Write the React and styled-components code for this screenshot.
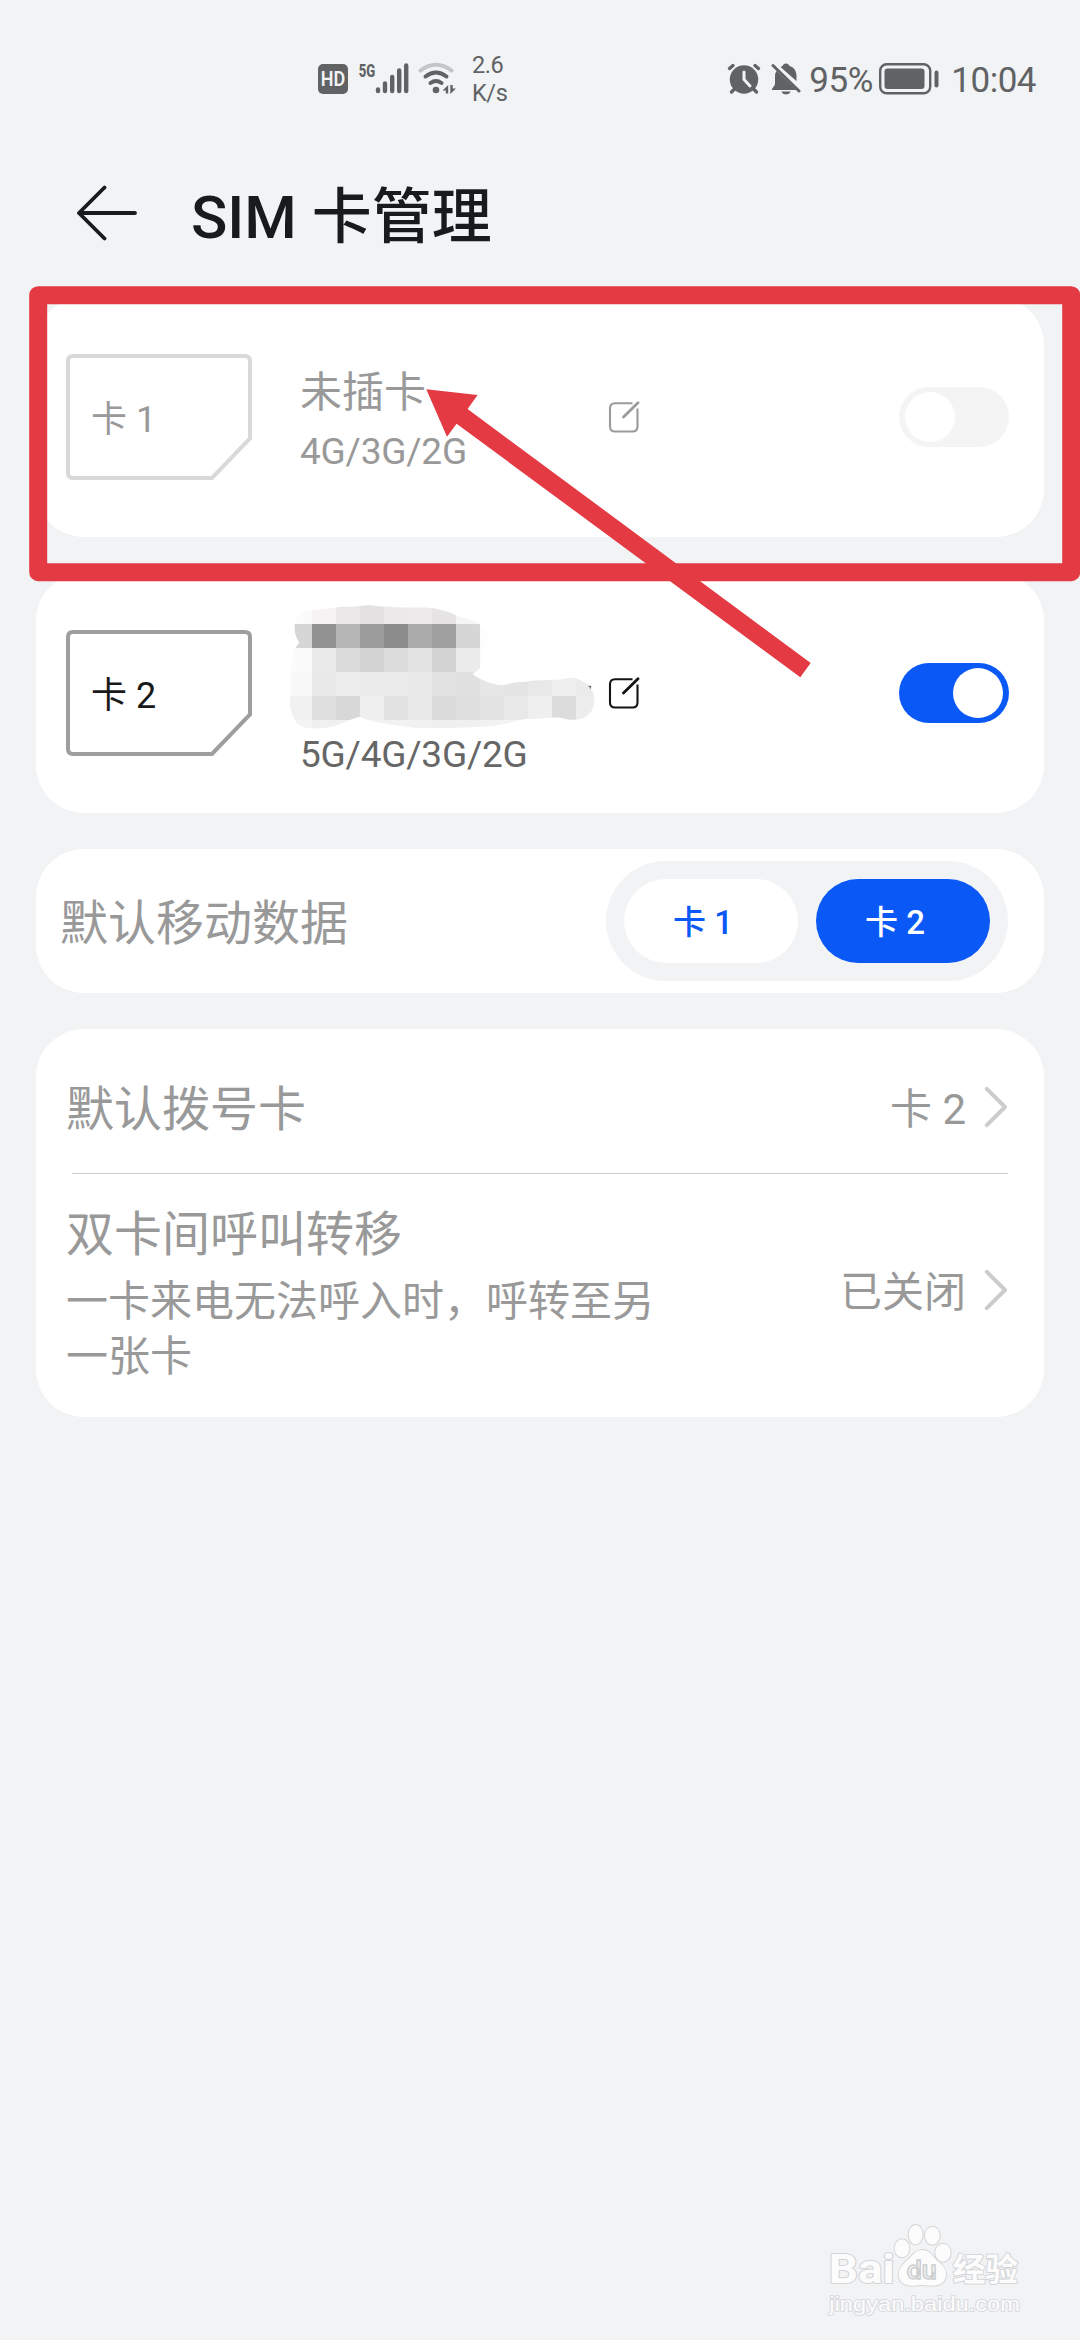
import React from 'react';
import styled, { createGlobalStyle } from 'styled-components';

const GlobalStyle = createGlobalStyle`
	* {
		box-sizing: border-box;
	}
	body {
		margin: 0;
		background: #f1f3f5;
		font-family: Roboto, "Noto Sans CJK SC", sans-serif;
	}
`;

const ink = '#606264';

const mosaic = [
	['#fbfbfb', '#f5f3f4', '#eae7e8', '#e4e1e2', '#ebe9ea', '#eeebec', '#e6e4e5', '#f6f5f5', '#fdfdfd'],
	['#d6d6d6', '#929292', '#b6b6b6', '#9c9c9c', '#8c8c8c', '#ababab', '#a0a0a0', '#d6d6d6', '#fdfdfd'],
	['#fbfbfb', '#eaeaea', '#dbdbdb', '#d3d3d3', '#dcdcdc', '#e3e3e3', '#d3d3d3', '#ececec', '#fdfdfd'],
	['#f8f8f8', '#e8e8e8', '#ededed', '#ebebeb', '#ebebeb', '#e8e8e8', '#e2e2e2', '#e0e0e0', '#e6e6e6', '#e4e4e4', '#e8e8e8', '#efefef', '#ebebeb'],
	['#f1f1f1', '#dfdfdf', '#d8d8d8', '#efefef', '#e2e2e2', '#e9e9e9', '#dbdbdb', '#dfdfdf', '#e3e3e3', '#e8e8e8', '#efefef', '#dcdcdc', '#ededed'],
	['#f3f3f3', '#f0f0f0', '#f0f0f0', '#f3f3f3', '#f2f2f2', '#f1f1f1', '#f0f0f0', '#f0f0f0', '#f2f2f2', '#f3f3f3', '#f3f3f3', '#f0f0f0', '#f0f0f0'],
];

function SignalIcons() {
	return (
		<svg width="140" height="40" viewBox="316 59 140 40">
			<rect x="318" y="64" width="30" height="30" rx="5" fill={ink} />
			<text x="320.8" y="86" fontSize="19.5" fontWeight="600" textLength="24.5" lengthAdjust="spacingAndGlyphs" fill="#f1f3f5">
				HD
			</text>
			<text x="358.8" y="76.5" fontSize="19" fontWeight="800" textLength="16.5" lengthAdjust="spacingAndGlyphs" fill={ink}>
				5G
			</text>
			<g stroke={ink} strokeWidth="4.4" strokeLinecap="round">
				<path d="M378 89.5V91M385 83.5V91M392.2 77V91M399.2 70.5V91M406.2 65.5V91" />
			</g>
			<g fill="none" strokeWidth="4" strokeLinecap="round">
				<path d="M420.5 70.5Q436 59 451.5 70.5" stroke="#c3c5c7" />
				<path d="M425.5 76.5Q436 68.5 446.5 76.5" stroke={ink} />
				<path d="M430.5 83Q436 79 441.5 83" stroke={ink} />
			</g>
			<circle cx="436" cy="90" r="3.3" fill={ink} />
			<path d="M442.5 90.5L448.2 85V93.5H445.8V90.5ZM456 88.5L450.3 94V85H452.7V88.5Z" fill={ink} />
		</svg>
	);
}

function AlarmIcon() {
	return (
		<svg width="34" height="32" viewBox="0 0 34 32">
			<g stroke={ink} strokeWidth="3.4" strokeLinecap="round">
				<path d="M2.5 5.5L6 2.5M31.5 5.5L28 2.5M4.5 29L8 25.5M29.5 29L26 25.5" />
			</g>
			<circle cx="17" cy="16.5" r="14.2" fill={ink} />
			<path d="M17 9V16.5L23 23" fill="none" stroke="#f1f3f5" strokeWidth="3" strokeLinecap="round" />
		</svg>
	);
}

function BellOffIcon() {
	return (
		<svg width="30" height="32" viewBox="0 0 30 32">
			<path d="M15 0.5C17 0.5 18 1.5 18.2 2.8C23 4.2 25.5 8 25.5 13V18L9.5 4.2C10.2 3.5 11 3.1 11.8 2.8C12 1.5 13 0.5 15 0.5Z" fill={ink} />
			<path d="M5.5 8L25.5 27H0.8C0.8 25 4 23.5 4 20V13C4 11 4.6 9.5 5.5 8Z" fill={ink} />
			<path d="M10.5 28.5H19.5C18.5 32.3 11.5 32.3 10.5 28.5Z" fill={ink} />
			<path d="M2 2.5L28 28" stroke={ink} strokeWidth="3" strokeLinecap="round" />
			<path d="M6 2L28 23.5" stroke="#f1f3f5" strokeWidth="2.2" />
		</svg>
	);
}

function BatteryIcon() {
	return (
		<svg width="60" height="32" viewBox="0 0 60 32">
			<rect x="1.2" y="1.2" width="50" height="29" rx="6.5" fill="none" stroke={ink} strokeWidth="2.4" />
			<rect x="5.5" y="5.5" width="40" height="20.5" rx="3" fill={ink} />
			<rect x="55.5" y="7.5" width="4" height="17" rx="2" fill={ink} />
		</svg>
	);
}

function BackArrow() {
	return (
		<svg width="62" height="56" viewBox="0 0 62 56">
			<path d="M28.5 2.5L3 28L28.5 53.5M3 28H59" fill="none" stroke="#191a1b" strokeWidth="3.8" strokeLinecap="round" strokeLinejoin="round" />
		</svg>
	);
}

function EditIcon({ color }) {
	return (
		<svg width="32" height="32" viewBox="0 0 32 32" fill="none" stroke={color} strokeLinecap="round">
			<path d="M24.5 2.2H7Q2 2.2 2 7.2V25.5Q2 30.5 7 30.5H24.5Q29.5 30.5 29.5 25.5V7.5" strokeWidth="2.1" strokeLinecap="butt" />
			<path d="M15.5 16L30 1.8" strokeWidth="2.8" />
		</svg>
	);
}

function Chevron() {
	return (
		<svg width="24" height="42" viewBox="0 0 24 42">
			<path d="M2.8 2.8L21 21L2.8 39.2" fill="none" stroke="#ccc" strokeWidth="4" strokeLinecap="round" strokeLinejoin="round" />
		</svg>
	);
}

function MaskedName() {
	return (
		<MaskSvg width="312" height="132" viewBox="24 0 936 396">
			<clipPath id="smudge">
				<path d="M44 72C48 45 65 33 100 30C140 28 160 20 200 20C240 20 250 14 275 16C300 22 320 18 340 22C400 24 450 20 470 27C500 32 520 42 528 46C560 58 600 66 612 84C625 95 625 120 612 136C600 150 614 180 600 205L578 222C600 240 640 254 664 256C690 254 690 246 730 246C780 236 840 244 860 234C890 230 900 240 925 254C950 280 950 320 925 345C900 365 870 360 840 353C800 350 780 360 740 356C700 362 680 374 640 378C560 384 420 388 380 380C330 374 270 366 240 350C220 352 170 382 130 384C90 388 60 382 50 368C34 350 30 320 29 300C36 270 34 240 33 216C36 180 36 160 46 144L58 127C46 112 43 95 44 72Z" />
			</clipPath>
			<g clipPath="url(#smudge)" shapeRendering="crispEdges">
				{mosaic.map((row, y) =>
					row.map((fill, x) => <rect key={`${x}-${y}`} x={24 + x * 72} y={y * 72} width="72" height="72" fill={fill} />)
				)}
			</g>
			<path d="M924 258L934 257L932 268L929 262Z" fill="#666" />
		</MaskSvg>
	);
}

function SimSlot({ label, active }) {
	return (
		<Slot $active={active}>
			<svg width="186" height="126" viewBox="0 0 186 126">
				<path d="M2 7Q2 2 7 2H179Q184 2 184 7V84.5L146 124H7Q2 124 2 119Z" fill="none" stroke={active ? '#9e9e9e' : '#d9d9d9'} strokeWidth="4" />
			</svg>
			<SlotLabel>{label}</SlotLabel>
		</Slot>
	);
}

function Watermark() {
	return (
		<WatermarkSvg width="300" height="140" viewBox="0 0 900 420">
			<g fill="#fcfcfd" stroke="#d3d5d7" strokeWidth="6" paintOrder="stroke" strokeLinejoin="round">
				<text x="146" y="250" fontSize="120" fontWeight="700" textLength="198" lengthAdjust="spacingAndGlyphs">
					Bai
				</text>
				<ellipse cx="366" cy="145" rx="22" ry="27" />
				<ellipse cx="407" cy="104" rx="21" ry="29" />
				<ellipse cx="457" cy="107" rx="22" ry="27" />
				<ellipse cx="489" cy="158" rx="23" ry="27" />
				<path d="M427 150C449 150 458 170 472 182C492 198 502 212 497 232C490 262 458 258 427 255C396 258 364 262 357 232C353 212 362 198 380 182C396 170 405 150 427 150Z" />
				<text x="518" y="242" fontSize="96" fontWeight="700" textLength="196" lengthAdjust="spacingAndGlyphs">
					经验
				</text>
				<text x="148" y="332" fontSize="62" fontFamily="Liberation Sans" textLength="572" lengthAdjust="spacingAndGlyphs" stroke="#d9dbdd" strokeWidth="6">
					jingyan.baidu.com
				</text>
			</g>
			<text x="380" y="238" fontSize="76" fontWeight="500" textLength="90" lengthAdjust="spacingAndGlyphs" fill="#f1f3f5" stroke="#cbcdcf" strokeWidth="4">
				du
			</text>
		</WatermarkSvg>
	);
}

export default function App() {
	return (
		<Screen>
			<GlobalStyle />
			<StatusBar>
				<SignalIcons />
				<NetSpeed>
					<span>2.6</span>
					<span>K/s</span>
				</NetSpeed>
				<StatusRight>
					<AlarmIcon />
					<BellOffIcon />
					<StatusText $width={64}>95%</StatusText>
					<BatteryIcon />
					<Clock>10:04</Clock>
				</StatusRight>
			</StatusBar>
			<TitleBar>
				<BackArrow />
				<Title>SIM 卡管理</Title>
			</TitleBar>
			<Cards>
				<SimCard>
					<SimSlot label="卡 1" />
					<SimInfo>
						<SimName>未插卡</SimName>
						<SimNet>4G/3G/2G</SimNet>
					</SimInfo>
					<EditIcon color="#9a9b9c" />
					<Switch>
						<Knob />
					</Switch>
				</SimCard>
				<SimCard>
					<SimSlot label="卡 2" active />
					<SimInfo>
						<MaskedName />
						<SimNet $active>5G/4G/3G/2G</SimNet>
					</SimInfo>
					<EditIcon color="#141414" />
					<Switch $on>
						<Knob />
					</Switch>
				</SimCard>
				<DataCard>
					<RowTitle>默认移动数据</RowTitle>
					<Segment>
						<SegmentItem>卡 1</SegmentItem>
						<SegmentItem $selected>卡 2</SegmentItem>
					</Segment>
				</DataCard>
				<ListCard>
					<Row>
						<RowTitle>默认拨号卡</RowTitle>
						<RowValue>
							<span>卡 2</span>
							<Chevron />
						</RowValue>
					</Row>
					<Divider />
					<Row $tall>
						<RowText>
							<RowTitle>双卡间呼叫转移</RowTitle>
							<RowNote>一卡来电无法呼入时，呼转至另一张卡</RowNote>
						</RowText>
						<RowValue>
							<span>已关闭</span>
							<Chevron />
						</RowValue>
					</Row>
				</ListCard>
			</Cards>
			<Marks width="1080" height="700" viewBox="0 0 1080 700">
				<rect x="38.2" y="295.2" width="1033" height="277" fill="none" stroke="#e33a44" strokeWidth="18" strokeLinejoin="round" />
				<path d="M426.3 389.3L477.6 395L467.6 409L810.7 663L800.3 677.3L456.6 423.7L447 436.7Z" fill="#e33a44" />
			</Marks>
			<Watermark />
		</Screen>
	);
}

const Screen = styled.div`
	position: relative;
	width: 1080px;
	height: 2340px;
	overflow: hidden;
	background: #f1f3f5;
`;

const StatusBar = styled.div`
	display: flex;
	align-items: center;
	height: 158px;
	padding: 0 44px 0 316px;
	color: ${ink};
`;

const NetSpeed = styled.div`
	display: flex;
	flex-direction: column;
	margin-left: 16px;
	font-size: 23.5px;
	line-height: 28px;
	letter-spacing: -0.4px;
`;

const StatusRight = styled.div`
	display: flex;
	align-items: center;
	margin-left: auto;
	> svg + svg {
		margin-left: 10px;
	}
`;

const StatusText = styled.span`
	width: ${(props) => props.$width}px;
	margin-left: 8px;
	margin-right: 6px;
	padding-top: 3px;
	font-size: 35px;
	line-height: 40px;
	letter-spacing: -0.5px;
`;

const Clock = styled(StatusText)`
	width: auto;
	margin: 0 0 0 12px;
`;

const TitleBar = styled.div`
	display: flex;
	align-items: center;
	height: 139px;
	padding: 0 0 29px 76px;
`;

const Title = styled.h1`
	margin: 0 0 0 53px;
	padding-top: 9px;
	font-size: 60px;
	font-weight: 500;
	line-height: 80px;
	color: #191a1b;
`;

const Cards = styled.div`
	display: flex;
	flex-direction: column;
	gap: 36px;
	padding: 0 36px;
`;

const Card = styled.section`
	border-radius: 48px;
	background: #fff;
`;

const SimCard = styled(Card)`
	display: flex;
	align-items: center;
	height: 240px;
	padding: 0 35px 0 30px;
`;

const Slot = styled.div`
	display: grid;
	align-items: center;
	width: 186px;
	height: 126px;
	color: ${(props) => (props.$active ? '#191919' : '#999')};
	> * {
		grid-area: 1 / 1;
	}
`;

const SlotLabel = styled.span`
	padding-top: 6px;
	padding-left: 25px;
	font-size: 36px;
	line-height: 48px;
`;

const SimInfo = styled.div`
	display: flex;
	flex-direction: column;
	justify-content: center;
	width: 308px;
	margin-left: 48px;
`;

const SimName = styled.span`
	padding-top: 8px;
	font-size: 42px;
	line-height: 62px;
	color: #999;
`;

const SimNet = styled.span`
	font-size: 37px;
	line-height: 56px;
	letter-spacing: -0.2px;
	color: ${(props) => (props.$active ? '#666' : '#999')};
`;

const MaskSvg = styled.svg`
	margin-top: -4px;
	margin-left: -12px;
	margin-bottom: -5px;
`;

const Switch = styled.div`
	display: flex;
	align-items: center;
	justify-content: ${(props) => (props.$on ? 'flex-end' : 'flex-start')};
	width: 110px;
	height: 60px;
	margin-left: auto;
	padding: 0 6px;
	border-radius: 30px;
	background: ${(props) => (props.$on ? '#0a59f7' : '#f4f4f4')};
`;

const Knob = styled.span`
	width: 50px;
	height: 50px;
	border-radius: 50%;
	background: #fff;
`;

const RowTitle = styled.div`
	padding-top: 6px;
	font-size: 48px;
	line-height: 72px;
	color: #999;
`;

const DataCard = styled(Card)`
	display: flex;
	align-items: center;
	justify-content: space-between;
	height: 144px;
	padding: 0 36px 0 24px;
`;

const Segment = styled.div`
	display: flex;
	gap: 18px;
	padding: 18px;
	border-radius: 60px;
	background: #f1f3f5;
`;

const SegmentItem = styled.span`
	width: 174px;
	height: 84px;
	padding-top: 2px;
	padding-left: 49px;
	border-radius: 42px;
	font-size: 33px;
	font-weight: 500;
	line-height: 84px;
	color: ${(props) => (props.$selected ? '#fff' : '#0a59f7')};
	background: ${(props) => (props.$selected ? '#0a59f7' : '#fff')};
`;

const ListCard = styled(Card)`
	height: 388px;
	padding: 0 36px 0 30px;
`;

const Row = styled.div`
	display: flex;
	align-items: center;
	justify-content: space-between;
	height: ${(props) => (props.$tall ? 243 : 144)}px;
	padding-top: ${(props) => (props.$tall ? 0 : 12)}px;
	padding-bottom: ${(props) => (props.$tall ? 11 : 0)}px;
`;

const RowText = styled.div`
	width: 600px;
	${RowTitle} {
		padding: 3px 0;
	}
`;

const RowNote = styled.div`
	font-size: 42px;
	line-height: 55px;
	color: #999;
`;

const RowValue = styled.div`
	display: flex;
	align-items: center;
	gap: 18px;
	font-size: 42px;
	line-height: 56px;
	color: #999;
	> span {
		padding-top: 5px;
	}
`;

const Divider = styled.div`
	height: 1px;
	margin-left: 6px;
	background: #ccc;
`;

const Marks = styled.svg`
	position: absolute;
	top: 0;
	left: 0;
`;

const WatermarkSvg = styled.svg`
	position: absolute;
	left: 780px;
	top: 2200px;
`;
